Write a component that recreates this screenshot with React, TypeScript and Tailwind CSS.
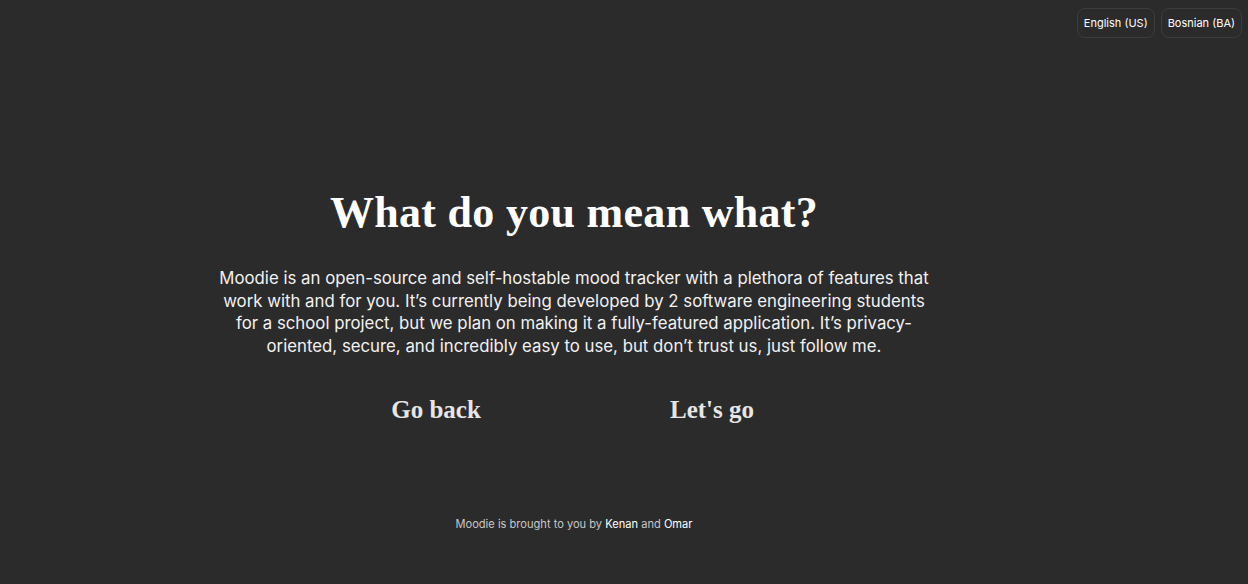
export default function App() {
  return (
    <div className="min-h-[584px] bg-[#2b2b2b] text-white relative font-['Inter','Noto_Sans',sans-serif]">
      {/* language switcher */}
      <div className="absolute top-[8px] right-[6px] flex gap-[6px]">
        <button className="h-[30px] px-[6px] rounded-[8px] border border-[#3d3d3d] text-[11px] text-white">
          English (US)
        </button>
        <button className="h-[30px] px-[6px] rounded-[8px] border border-[#3d3d3d] text-[11px] text-white">
          Bosnian (BA)
        </button>
      </div>

      <div className="flex flex-col items-center pr-[100px] pt-[187px]">
        <h1 className="font-['Liberation_Serif',serif] font-bold text-[44px] leading-[52px] tracking-[0.3px]">
          What do you mean what?
        </h1>
        <p className="mt-[28px] text-center text-[16.8px] leading-[22.7px] text-[#f2f2f2] whitespace-nowrap">
          Moodie is an open-source and self-hostable mood tracker with a plethora of features that
          <br />
          work with and for you. It’s currently being developed by 2 software engineering students
          <br />
          for a school project, but we plan on making it a fully-featured application. It’s privacy-
          <br />
          oriented, secure, and incredibly easy to use, but don’t trust us, just follow me.
        </p>
        <div className="mt-[33px] flex gap-[136px]">
          <button className="w-[140px] text-center font-['Liberation_Serif',serif] font-bold text-[25px] text-[#e6e6e6]">
            Go back
          </button>
          <button className="w-[140px] text-center font-['Liberation_Serif',serif] font-bold text-[25px] text-[#e6e6e6]">
            Let's go
          </button>
        </div>
        <p className="mt-[88px] text-[11.1px] text-[#c8c8c8]">
          Moodie is brought to you by <span className="text-white">Kenan</span> and{" "}
          <span className="text-white">Omar</span>
        </p>
      </div>
    </div>
  )
}
